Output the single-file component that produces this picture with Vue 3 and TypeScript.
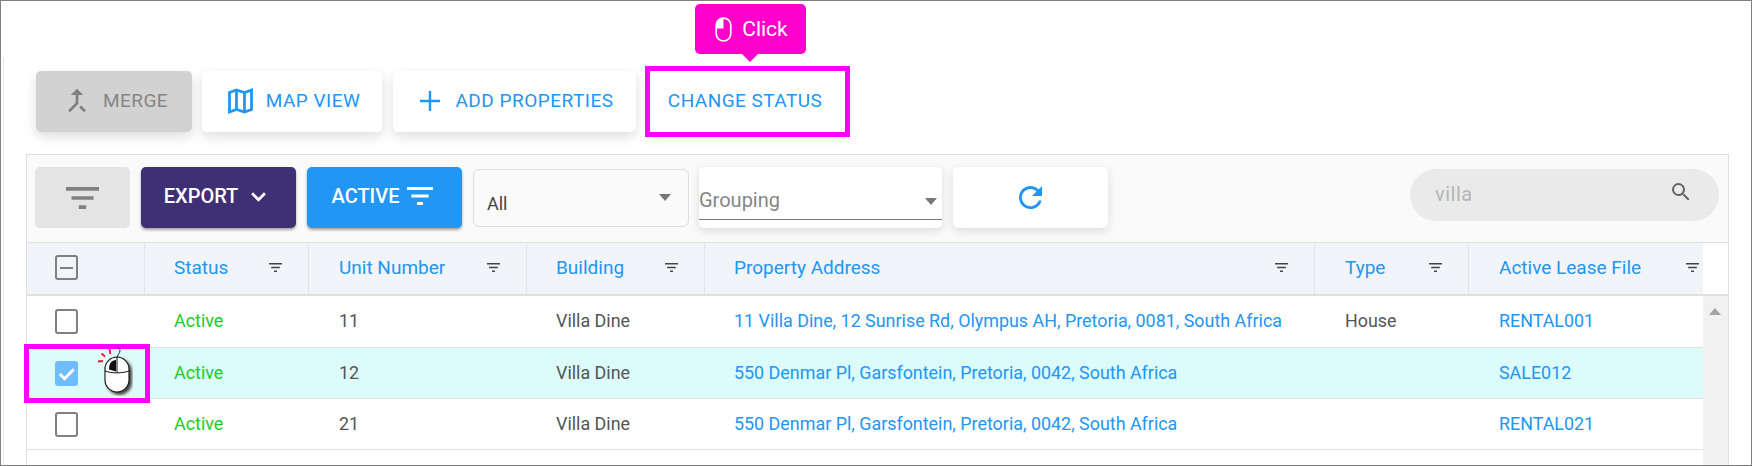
<script setup lang="ts">
interface Column {
  label: string
}

interface Row {
  unit: string
  address: string
  type: string
  lease: string
  selected?: boolean
}

const columns: Column[] = [
  { label: 'Status' },
  { label: 'Unit Number' },
  { label: 'Building' },
  { label: 'Property Address' },
  { label: 'Type' },
  { label: 'Active Lease File' }
]

const rows: Row[] = [
  { unit: '11', address: '11 Villa Dine, 12 Sunrise Rd, Olympus AH, Pretoria, 0081, South Africa', type: 'House', lease: 'RENTAL001' },
  { unit: '12', address: '550 Denmar Pl, Garsfontein, Pretoria, 0042, South Africa', type: '', lease: 'SALE012', selected: true },
  { unit: '21', address: '550 Denmar Pl, Garsfontein, Pretoria, 0042, South Africa', type: '', lease: 'RENTAL021' }
]

const filterPath = 'M10 18h4v-2h-4v2zM3 6v2h18V6H3zm3 7h12v-2H6v2z'
</script>

<template>
  <div class="page">
    <div class="actions">
      <button class="action merge">
        <svg class="merge-icon" viewBox="5 3 14 18"><path d="M17 20.410L18.410 19 15 15.590 13.590 17 17 20.410zM7.500 8H11v5.590L5.590 19 7 20.410l6-6V8h3.500L12 3.500 7.500 8z" /></svg>
        MERGE
      </button>
      <button class="action map">
        <svg class="map-icon" viewBox="0 0 25 26"><path d="M1.500 4.500 8.500 2l8 2.500L23.500 2v19.500L16.500 24l-8-2.500-7 2.500zM8.500 2v19.500M16.500 4.500V24" /></svg>
        MAP VIEW
      </button>
      <button class="action add">
        <svg class="add-icon" viewBox="0 0 20 20"><path d="M8.800 0h2.400v8.800H20v2.400h-8.800V20H8.800v-8.800H0V8.800h8.800z" /></svg>
        ADD PROPERTIES
      </button>
      <button class="action change">
        CHANGE STATUS
        <span class="tip">
          <svg class="tip-mouse" viewBox="0 0 16 24">
            <rect x="1" y="1" width="14" height="22" rx="7" fill="none" stroke="#fff" stroke-width="1.600" />
            <path d="M8 1.500a6.500 6.500 0 0 0-6.500 6.500V11H8z" fill="#fff" />
          </svg>
          Click
        </span>
      </button>
    </div>

    <div class="panel">
      <div class="toolbar">
        <button class="tool filter">
          <svg viewBox="3 6 18 12" preserveAspectRatio="none"><path :d="filterPath" /></svg>
        </button>
        <button class="tool export">
          EXPORT
          <svg class="chevron" viewBox="0 0 18 12"><path d="M2 2.500l7 7 7-7" /></svg>
        </button>
        <button class="tool active">
          ACTIVE
          <svg class="active-icon" viewBox="3 6 18 12" preserveAspectRatio="none"><path :d="filterPath" /></svg>
        </button>
        <div class="select-all">
          <span>All</span>
          <i class="caret"></i>
        </div>
        <div class="grouping">
          <span>Grouping</span>
          <i class="caret"></i>
        </div>
        <button class="tool refresh">
          <svg viewBox="4 4 16 16"><path d="M17.650 6.350C16.200 4.900 14.210 4 12 4c-4.420 0-7.990 3.580-7.990 8s3.570 8 7.990 8c3.730 0 6.840-2.550 7.730-6h-2.080c-.82 2.330-3.040 4-5.650 4-3.310 0-6-2.690-6-6s2.690-6 6-6c1.660 0 3.140.69 4.220 1.780L13 11h7V4l-2.350 2.350z" /></svg>
        </button>
        <div class="search">
          <span>villa</span>
          <svg viewBox="0 0 24 24"><path d="M15.500 14h-.79l-.28-.27A6.470 6.470 0 0 0 16 9.500 6.500 6.500 0 1 0 9.500 16c1.610 0 3.090-.59 4.230-1.570l.27.28v.79l5 4.990L20.490 19l-4.990-5zm-6 0C7.010 14 5 11.990 5 9.500S7.010 5 9.500 5 14 7.010 14 9.500 11.990 14 9.500 14z" /></svg>
        </div>
      </div>

      <div class="table-wrap">
        <div class="table">
          <div class="grid head">
            <div class="cell check-cell"><span class="box partial"></span></div>
            <div v-for="col in columns" :key="col.label" class="cell">
              <span class="head-label">{{ col.label }}</span>
              <svg class="mini-filter" viewBox="3 6 18 12" preserveAspectRatio="none"><path :d="filterPath" /></svg>
            </div>
          </div>
          <div v-for="row in rows" :key="row.unit" class="grid body-row" :class="{ selected: row.selected }">
            <div class="cell check-cell">
              <span class="box" :class="{ checked: row.selected }">
                <svg v-if="row.selected" viewBox="0 0 24 24"><path d="M5 12.500l5 5L19.500 7.500" /></svg>
              </span>
              <template v-if="row.selected">
                <span class="highlight"></span>
                <svg class="pointer" viewBox="0 0 36 50">
                  <defs>
                    <filter id="mouse-shadow" x="-30%" y="-30%" width="170%" height="170%">
                      <feGaussianBlur stdDeviation="1.800" />
                    </filter>
                  </defs>
                  <rect x="10" y="13" width="25" height="36" rx="12.500" fill="#444" filter="url(#mouse-shadow)" />
                  <path d="M20.500 11c0-3 2.500-3.500 2.500-6.500 0-1.500-1-2.500-2.500-3" fill="none" stroke="#222" stroke-width="1" />
                  <rect x="8" y="11" width="24" height="35" rx="12" fill="#fff" stroke="#111" stroke-width="1.100" />
                  <path d="M8 25c7 2.500 17 2.500 24 0M20 11v15.500" fill="none" stroke="#111" stroke-width="1" />
                  <path d="M19 14c-4.500 0-7 3.500-7 9.500l7 2z" fill="#111" />
                  <path d="M4.500 7.500 8 10.500M12.500 3l.8 5M1 15.500l5-.5" fill="none" stroke="#f5102c" stroke-width="1.800" />
                </svg>
              </template>
            </div>
            <div class="cell status">Active</div>
            <div class="cell">{{ row.unit }}</div>
            <div class="cell">Villa Dine</div>
            <div class="cell link">{{ row.address }}</div>
            <div class="cell">{{ row.type }}</div>
            <div class="cell link">{{ row.lease }}</div>
          </div>
        </div>
        <div class="scrollbar">
          <div class="scroll-corner"></div>
          <div class="scroll-track"><i></i></div>
        </div>
      </div>
    </div>
  </div>
</template>

<style>
html,
body {
  margin: 0;
  background: #fff;
}
</style>

<style scoped>
.page {
  position: relative;
  box-sizing: border-box;
  width: 1752px;
  height: 466px;
  overflow: hidden;
  border: 1px solid #808080;
  font-family: Roboto, "Liberation Sans", sans-serif;
  padding-top: 70px;
  background: #fff;
}

.page::before {
  content: "";
  position: absolute;
  left: 2px;
  top: 56px;
  bottom: 0;
  width: 1px;
  background: #e8e8e8;
}

button {
  font-family: inherit;
  border: 0;
  cursor: pointer;
}

.actions {
  display: flex;
  gap: 10px;
  padding-left: 35px;
  height: 61px;
}

.action {
  position: relative;
  display: flex;
  align-items: center;
  justify-content: center;
  height: 61px;
  background: #fff;
  color: #2196f3;
  font-size: 19px;
  font-weight: 400;
  letter-spacing: 0.45px;
  border-radius: 5px;
  box-shadow: 0 5px 12px rgba(0, 0, 0, 0.13);
  padding: 0 0 2px;
}

.merge {
  width: 156px;
  background: #d2d2d2;
  color: #858585;
  gap: 16px;
  padding-left: 7px;
}

.merge-icon {
  width: 20px;
  height: 25px;
  fill: #808080;
}

.map {
  width: 180px;
  gap: 13px;
  padding-left: 4px;
}

.map-icon {
  width: 25px;
  height: 26px;
  fill: none;
  stroke: #2196f3;
  stroke-width: 2.800;
}

.add {
  width: 243px;
  margin-left: 1px;
  gap: 15px;
  padding-left: 5px;
  letter-spacing: 0.5px;
}

.add-icon {
  width: 20px;
  height: 20px;
  fill: #2196f3;
}

.change {
  width: 195px;
  margin-left: 4px;
  padding-right: 5px;
  border-radius: 0;
}

.change::after {
  content: "";
  position: absolute;
  inset: -5px;
  border: 5px solid #ff00ff;
}

.tip {
  position: absolute;
  left: 45px;
  top: -67px;
  width: 111px;
  height: 50px;
  box-sizing: border-box;
  padding-left: 2px;
  display: flex;
  align-items: center;
  justify-content: center;
  gap: 10px;
  background: #ff00cc;
  color: #fff;
  font-size: 21px;
  letter-spacing: 0;
  border-radius: 5px;
}

.tip::after {
  content: "";
  position: absolute;
  left: 47px;
  top: 50px;
  border: 8px solid transparent;
  border-top-color: #ff00cc;
  border-bottom-width: 0;
}

.tip-mouse {
  width: 17px;
  height: 25px;
}

.panel {
  box-sizing: border-box;
  margin: 22px 0 0 25px;
  width: 1703px;
  height: 320px;
  border: 1px solid #e0e0e0;
  background: #fafafa;
}

.toolbar {
  display: flex;
  align-items: flex-start;
  gap: 11px;
  height: 87px;
  box-sizing: border-box;
  padding: 12px 0 0 8px;
}

.tool {
  display: flex;
  align-items: center;
  justify-content: center;
  width: 155px;
  height: 61px;
  border-radius: 5px;
  color: #fff;
  font-size: 20px;
  font-weight: 500;
  padding: 0 0 3px;
}

.filter {
  width: 95px;
  background: #e4e4e4;
  padding: 0;
}

.filter svg {
  width: 33px;
  height: 22px;
  fill: #808080;
}

.export {
  background: #3f3075;
  box-shadow: 0 2px 3px rgba(0, 0, 0, 0.35);
  gap: 12px;
  padding-right: 6px;
}

.chevron {
  width: 17px;
  height: 11px;
  fill: none;
  stroke: #fff;
  stroke-width: 3;
}

.active {
  background: #2196f3;
  box-shadow: 0 2px 3px rgba(0, 0, 0, 0.35);
  gap: 8px;
  padding-right: 4px;
}

.active-icon {
  width: 26px;
  height: 18px;
  fill: #fff;
}

.select-all {
  position: relative;
  box-sizing: border-box;
  width: 216px;
  height: 58px;
  margin-top: 2px;
  padding: 23px 0 0 13px;
  border: 1px solid #ddd;
  border-radius: 6px;
  font-size: 18px;
  color: #444;
}

.select-all .caret {
  position: absolute;
  right: 17px;
  top: 24px;
}

.grouping {
  position: relative;
  box-sizing: border-box;
  width: 243px;
  height: 61px;
  margin-left: -1px;
  padding: 21px 0 0;
  background: #fff;
  border-radius: 5px;
  box-shadow: 0 3px 10px rgba(0, 0, 0, 0.12);
  font-size: 20px;
  color: #858585;
}

.grouping::after {
  content: "";
  position: absolute;
  left: 0;
  right: 0;
  top: 52px;
  height: 1px;
  background: #777;
}

.grouping .caret {
  position: absolute;
  right: 5px;
  top: 31px;
}

.caret {
  width: 0;
  height: 0;
  border: 6px solid transparent;
  border-top: 7px solid #777;
  border-bottom-width: 0;
}

.refresh {
  background: #fff;
  box-shadow: 0 3px 10px rgba(0, 0, 0, 0.12);
  padding: 0;
}

.refresh svg {
  width: 23px;
  height: 23px;
  fill: #2196f3;
}

.search {
  box-sizing: border-box;
  display: flex;
  align-items: center;
  justify-content: space-between;
  width: 309px;
  height: 52px;
  margin: 2px 9px 0 auto;
  padding: 0 26px 2px 25px;
  border-radius: 26px;
  background: #eaeaea;
  color: #b5b5b5;
  font-size: 20px;
  letter-spacing: 0.5px;
}

.search svg {
  width: 24px;
  height: 24px;
  margin-top: -4px;
  fill: #666;
}

.table-wrap {
  display: flex;
  height: 231px;
  background: #fff;
}

.table {
  width: 1676px;
}

.grid {
  display: grid;
  grid-template-columns: 118px 164px 218px 178px 610px 154px 234px;
  box-sizing: border-box;
}

.cell {
  display: flex;
  align-items: center;
  justify-content: space-between;
  box-sizing: border-box;
  padding: 0 26px 2px 29px;
  font-size: 17.900px;
  color: #555;
  white-space: nowrap;
}

.cell:nth-child(3),
.cell:nth-child(6),
.cell:nth-child(7) {
  padding-left: 30px;
}

.head {
  height: 54px;
  background: #f1f4f9;
  border-top: 1px solid #e0e0e0;
  border-bottom: 2px solid #e0e0e0;
}

.head .cell {
  border-right: 1px solid #e2e5ea;
  font-size: 19px;
  padding-bottom: 2px;
}

.head .cell:last-child {
  border-right: 0;
  padding-right: 4px;
}

.head-label {
  color: #2196f3;
}

.mini-filter {
  width: 13px;
  height: 9px;
  fill: #444;
  flex: none;
}

.body-row {
  height: 52px;
  border-bottom: 1px solid #e0e0e0;
}

.body-row + .body-row {
  height: 51px;
}

.selected {
  background: #dcfbfb;
}

.status {
  color: #22cc22;
}

.link {
  color: #2196f3;
}

.check-cell {
  position: relative;
  padding: 0 0 0 28px;
  justify-content: flex-start;
}

.box {
  display: block;
  box-sizing: border-box;
  width: 23px;
  height: 25px;
  border: 2px solid #808080;
  border-radius: 3px;
}

.partial {
  display: flex;
  align-items: center;
  justify-content: center;
}

.partial::before {
  content: "";
  width: 13px;
  height: 2px;
  background: #808080;
}

.checked {
  border: 0;
  background: #6fbcff;
}

.checked svg {
  display: block;
  width: 23px;
  height: 25px;
  fill: none;
  stroke: #fff;
  stroke-width: 3;
}

.highlight {
  position: absolute;
  left: -3px;
  top: -4px;
  width: 126px;
  height: 59px;
  box-sizing: border-box;
  border: 5px solid #ff00ff;
}

.pointer {
  position: absolute;
  left: 70px;
  top: -2px;
  width: 36px;
  height: 50px;
}

.scrollbar {
  width: 25px;
}

.scroll-corner {
  height: 54px;
  border-top: 1px solid #e0e0e0;
  border-bottom: 2px solid #e0e0e0;
  box-sizing: border-box;
}

.scroll-track {
  height: 177px;
  background: #f1f1f1;
  padding: 12px 0 0 6px;
  box-sizing: border-box;
}

.scroll-track i {
  display: block;
  width: 0;
  height: 0;
  border: 6px solid transparent;
  border-bottom: 7px solid #a3a3a3;
  border-top-width: 0;
}
</style>
